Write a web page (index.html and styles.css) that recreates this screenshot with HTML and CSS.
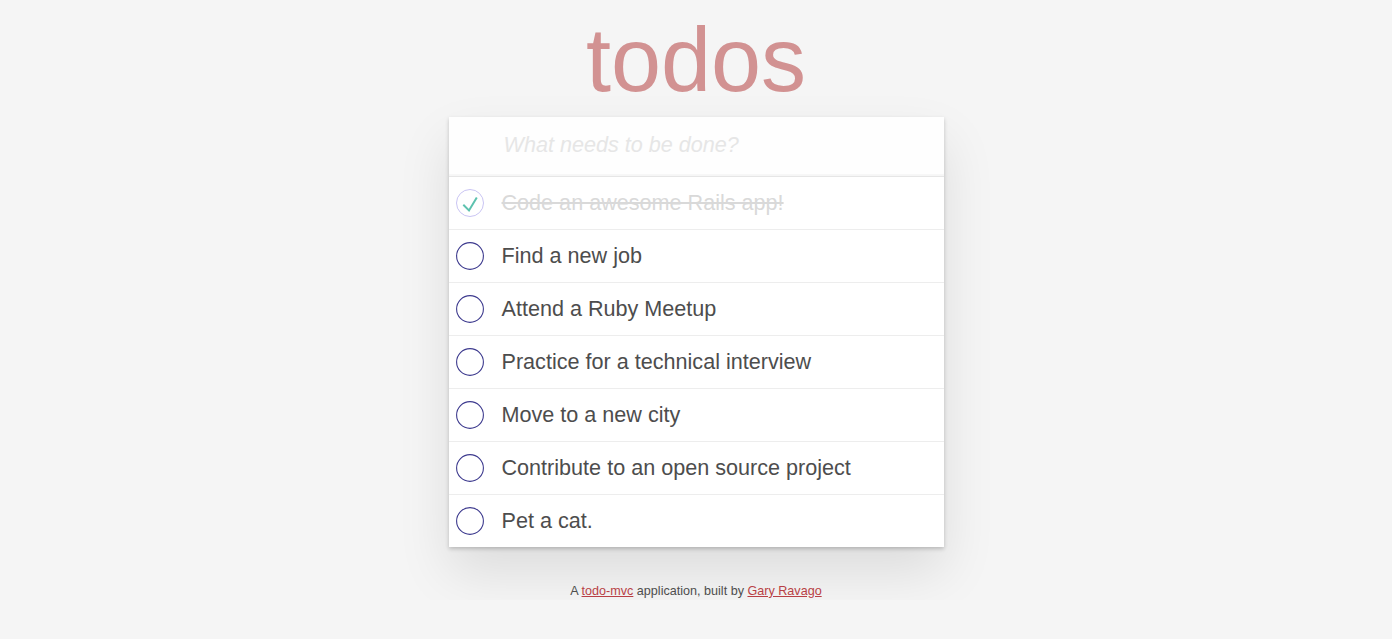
FILE: index.html
```html
<!DOCTYPE html>
<html lang="en">
<head>
<meta charset="utf-8">
<title>todos</title>
<link rel="stylesheet" href="styles.css">
</head>
<body>
<div class="page">
  <header class="header">
    <h1 class="title">todos</h1>
  </header>
  <section class="todoapp">
    <input class="new-todo" type="text" placeholder="What needs to be done?">
    <ul class="todo-list">
      <li class="todo completed">
        <span class="toggle">
          <svg width="28" height="28" viewBox="0 0 28 28"><circle cx="14" cy="14" r="13.5" fill="none" stroke="#c9c4f3" stroke-width="1"/><path d="M7.3 15.8 L13 21.4 L20.8 8.4" fill="none" stroke="#5dc2af" stroke-width="2"/></svg>
        </span>
        <label class="label">Code an awesome Rails app!</label>
      </li>
      <li class="todo">
        <span class="toggle"><svg width="28" height="28" viewBox="0 0 28 28"><circle cx="14" cy="14" r="13.4" fill="none" stroke="#3d3a8e" stroke-width="1.1"/></svg></span>
        <label class="label">Find a new job</label>
      </li>
      <li class="todo">
        <span class="toggle"><svg width="28" height="28" viewBox="0 0 28 28"><circle cx="14" cy="14" r="13.4" fill="none" stroke="#3d3a8e" stroke-width="1.1"/></svg></span>
        <label class="label">Attend a Ruby Meetup</label>
      </li>
      <li class="todo">
        <span class="toggle"><svg width="28" height="28" viewBox="0 0 28 28"><circle cx="14" cy="14" r="13.4" fill="none" stroke="#3d3a8e" stroke-width="1.1"/></svg></span>
        <label class="label">Practice for a technical interview</label>
      </li>
      <li class="todo">
        <span class="toggle"><svg width="28" height="28" viewBox="0 0 28 28"><circle cx="14" cy="14" r="13.4" fill="none" stroke="#3d3a8e" stroke-width="1.1"/></svg></span>
        <label class="label">Move to a new city</label>
      </li>
      <li class="todo">
        <span class="toggle"><svg width="28" height="28" viewBox="0 0 28 28"><circle cx="14" cy="14" r="13.4" fill="none" stroke="#3d3a8e" stroke-width="1.1"/></svg></span>
        <label class="label">Contribute to an open source project</label>
      </li>
      <li class="todo">
        <span class="toggle"><svg width="28" height="28" viewBox="0 0 28 28"><circle cx="14" cy="14" r="13.4" fill="none" stroke="#3d3a8e" stroke-width="1.1"/></svg></span>
        <label class="label">Pet a cat.</label>
      </li>
    </ul>
  </section>
  <footer class="info">
    <p>A <a href="#">todo-mvc</a> application, built by <a href="#">Gary Ravago</a></p>
  </footer>
</div>
</body>
</html>
```

FILE: styles.css
```css
html, body {
  margin: 0;
  padding: 0;
}
body {
  background: #f5f5f5;
  color: #4d4d4d;
  font-family: "Liberation Sans", Arial, Helvetica, sans-serif;
  font-size: 12.6px;
}
.page {
  width: 495px;
  margin: 0 auto;
}
.header {
  padding-top: 15px;
  margin-bottom: 12px;
}
.title {
  margin: 0;
  font-size: 90px;
  line-height: 90px;
  font-weight: 400;
  text-align: center;
  color: #d29292;
}
.todoapp {
  background: #fff;
  box-shadow: 0 2px 4px 0 rgba(0,0,0,0.2), 0 25px 50px 0 rgba(0,0,0,0.1);
}
.new-todo {
  display: block;
  width: 100%;
  height: 59px;
  box-sizing: border-box;
  margin: 0;
  padding: 0 14px 3px 55px;
  border: none;
  outline: none;
  background: rgba(0,0,0,0.003);
  box-shadow: inset 0 -2px 1px rgba(0,0,0,0.03);
  font-family: inherit;
  font-size: 21.6px;
  color: #4d4d4d;
}
.new-todo::placeholder {
  font-style: italic;
  color: #e6e6e6;
}
.todo-list {
  list-style: none;
  margin: 0;
  padding: 0;
  border-top: 1px solid #e6e6e6;
}
.todo {
  display: flex;
  align-items: center;
  height: 52px;
  border-bottom: 1px solid #ededed;
  font-size: 21.6px;
}
.todo:last-child {
  border-bottom: none;
}
.toggle {
  display: flex;
  width: 28px;
  height: 28px;
  margin-left: 7px;
  margin-right: 18px;
}
.label {
  line-height: 1.2;
  color: #4d4d4d;
}
.completed .label {
  color: #d9d9d9;
  text-decoration: line-through;
}
.info {
  margin-top: 35px;
  text-align: center;
}
.info p {
  margin: 0;
  line-height: 18px;
}
.info a {
  color: #b83f45;
  text-decoration: underline;
}
```
